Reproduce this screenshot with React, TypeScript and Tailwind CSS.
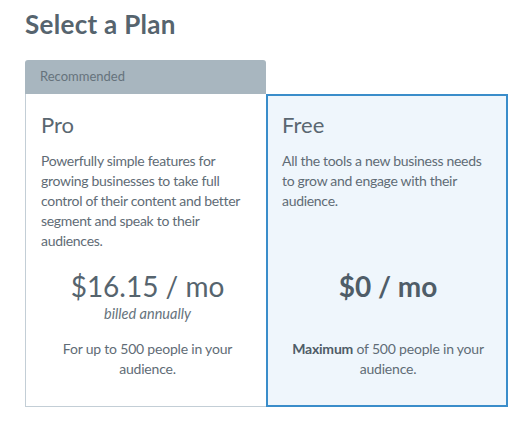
import React from "react";

const font = { fontFamily: "Lato, 'Noto Sans', sans-serif" };

export default function App() {
  return (
    <div className="w-[528px] h-[425px] bg-white text-[#5a6771]" style={font}>
      <div className="pl-[25px] pt-[8px]">
        <h1 className="text-[26px] leading-[32px] font-bold text-[#56646e] tracking-[0.3px]">Select a Plan</h1>
        <div className="flex mt-[20px]">
          <div className="w-[241px] flex flex-col">
            <div className="h-[34px] bg-[#a8b6bf] rounded-t-[3px] pl-[15px] flex items-center text-[13px] text-[#66737c]">
              Recommended
            </div>
            <div className="h-[313px] border-l border-b border-[#c3ced6] pl-[15px] pr-[12px] pt-[17px]">
              <div className="text-[22px] leading-[28px] text-[#5a6771]">Pro</div>
              <p className="mt-[12px] h-[100px] text-[14px] leading-[20px] tracking-[-0.3px] text-[#5f6c76]">
                Powerfully simple features for growing businesses to take full control of their content and better segment and speak to their audiences.
              </p>
              <div className="mt-[17px] text-center text-[28px] leading-[36px] text-[#56646e]">$16.15 / mo</div>
              <div className="text-center text-[14.5px] leading-[20px] italic text-[#66737c]">billed annually</div>
              <p className="mt-[15px] text-center text-[14px] leading-[20px] tracking-[-0.2px] text-[#5f6c76] px-[4px]">
                For up to 500 people in your audience.
              </p>
            </div>
          </div>
          <div className="w-[242px] mt-[34px] h-[313px] border-2 border-[#3a8dca] bg-[#eff6fc] pl-[14px] pr-[12px] pt-[15px]">
            <div className="text-[22px] leading-[28px] text-[#5a6771]">Free</div>
            <p className="mt-[12px] h-[100px] text-[14px] leading-[20px] tracking-[-0.3px] text-[#5f6c76]">
              All the tools a new business needs to grow and engage with their audience.
            </p>
            <div className="mt-[17px] text-center text-[28px] leading-[36px] font-bold text-[#4f5d68]">$0 / mo</div>
            <div className="h-[20px]" />
            <p className="mt-[15px] text-center text-[14px] leading-[20px] tracking-[-0.2px] text-[#5f6c76] px-[4px]">
              <span className="font-bold text-[#4f5d68]">Maximum</span> of 500 people in your audience.
            </p>
          </div>
        </div>
      </div>
    </div>
  );
}
